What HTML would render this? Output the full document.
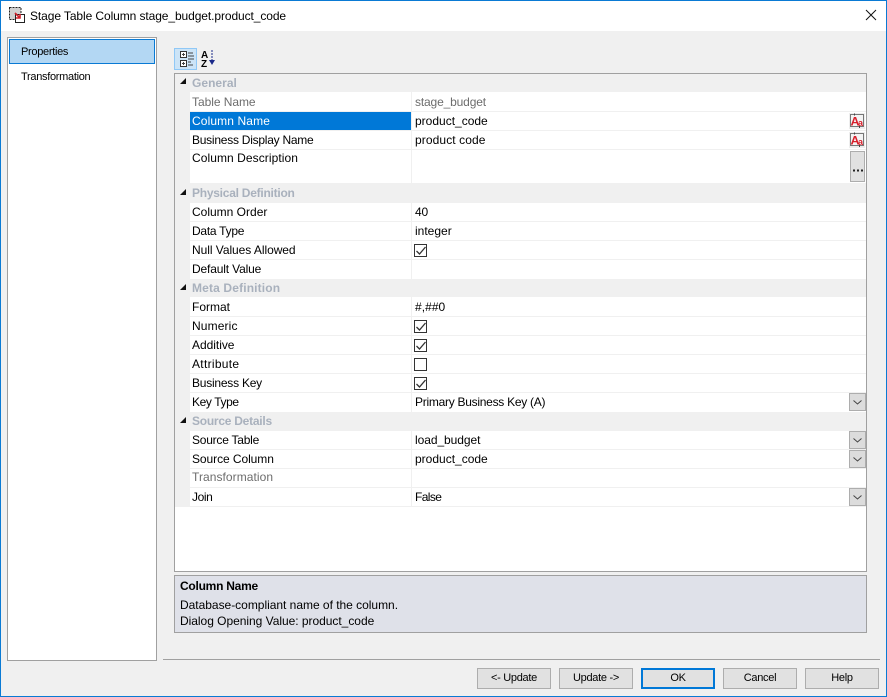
<!DOCTYPE html>
<html><head><meta charset="utf-8"><style>
html,body{margin:0;padding:0;width:887px;height:697px;overflow:hidden;background:#f0f0f0}
body{position:relative;font:12px "Liberation Sans",sans-serif;color:#000}
div,span,svg{position:absolute;box-sizing:border-box}
.t{white-space:nowrap;line-height:14px;letter-spacing:-.15px}
.h{color:#a9b1bd;font-weight:bold;letter-spacing:-.25px}
.g{color:#6d6d6d}
.sep{left:190px;width:676px;height:1px;background:#f0f0f0}
.btn{top:668px;height:21px;width:74px;background:#e1e1e1;border:1px solid #adadad;text-align:center;line-height:19px;font-size:11px;letter-spacing:-.3px}
.drop{left:849px;width:17px;height:18px;background:#dcdcdc;border:1px solid #adadad}
.cb{left:414px;width:13px;height:13px;background:#fff;border:1px solid #333}
</style></head><body>
<div style="left:0;top:0;width:887px;height:697px;border:1px solid #0a7ad4;z-index:9"></div>
<div style="left:1px;top:1px;width:885px;height:30px;background:#fff"></div>
<svg style="left:8px;top:7px" width="18" height="18" viewBox="0 0 18 18"><rect x="1.500" y=".5" width="11.500" height="12" fill="#d0d0d0" stroke="#222" stroke-dasharray="2 1"/><rect x="7.500" y="7.500" width="9" height="8" fill="#fff" stroke="#222"/><path d="M7 6l5 5M12 7v4H8" stroke="#d0202a" stroke-width="1.600" fill="none"/></svg>
<span class="t" style="left:30px;top:9px;letter-spacing:-.09px">Stage Table Column stage_budget.product_code</span>
<svg style="left:865px;top:9px" width="13" height="13"><path d="M1 1l10 10M11 1L1 11" stroke="#111" stroke-width="1" fill="none"/></svg>

<div style="left:7px;top:37px;width:150px;height:624px;background:#fff;border:1px solid #a0a0a0"></div>
<div style="left:9px;top:39px;width:146px;height:25px;background:#b3d7f3;border:1px solid #0a7ad4"></div>
<span class="t" style="left:21px;top:45px;font-size:11px;letter-spacing:-.3px">Properties</span>
<span class="t" style="left:21px;top:70px;font-size:11px;letter-spacing:-.3px">Transformation</span>

<div style="left:174px;top:48px;width:23px;height:22px;background:#cce4f7;border:1px solid #90c8f6"></div>
<svg style="left:180px;top:51px" width="16" height="16" viewBox="0 0 16 16"><rect x=".5" y=".5" width="6" height="6" fill="#fff" stroke="#333"/><rect x=".5" y="9.500" width="6" height="6" fill="#fff" stroke="#333"/><path d="M2 3.500h3M3.500 2v3M2 12.500h3M3.500 11v3M8 2h5M8 5h6M8 8h6M8 11h3M8 14h5" stroke="#444" fill="none"/></svg>
<svg style="left:201px;top:49px" width="16" height="20" viewBox="0 0 16 20"><text x="0" y="9" font-family="Liberation Sans" font-size="10" font-weight="bold">A</text><text x="0" y="18" font-family="Liberation Sans" font-size="10" font-weight="bold">Z</text><path d="M11 1v11" stroke="#1a2a8a" stroke-dasharray="2 1"/><path d="M8 11h6l-3 5z" fill="#1a2a8a"/></svg>

<div style="left:174px;top:73px;width:693px;height:499px;background:#fff;border:1px solid #a0a0a0"></div>
<div style="left:175px;top:74px;width:15px;height:433px;background:#f0f0f0"></div>
<div style="left:175px;top:74px;width:691px;height:18px;background:#f0f0f0"></div>
<div style="left:175px;top:183px;width:691px;height:20px;background:#f0f0f0"></div>
<div style="left:175px;top:279px;width:691px;height:18px;background:#f0f0f0"></div>
<div style="left:175px;top:412px;width:691px;height:19px;background:#f0f0f0"></div>
<div style="left:175px;top:506px;width:691px;height:1px;background:#f0f0f0"></div>
<div style="left:411px;top:92px;width:1px;height:414px;background:#f0f0f0"></div>
<div class="sep" style="top:111px"></div><div class="sep" style="top:130px"></div><div class="sep" style="top:149px"></div>
<div class="sep" style="top:221px"></div><div class="sep" style="top:240px"></div><div class="sep" style="top:259px"></div>
<div class="sep" style="top:316px"></div><div class="sep" style="top:335px"></div><div class="sep" style="top:354px"></div><div class="sep" style="top:373px"></div><div class="sep" style="top:392px"></div>
<div class="sep" style="top:449px"></div><div class="sep" style="top:468px"></div><div class="sep" style="top:487px"></div>
<div style="left:190px;top:112px;width:221px;height:18px;background:#0078d7"></div>

<svg style="left:180px;top:78px" width="7" height="7"><path d="M6 0v6H0z" fill="#111"/></svg>
<svg style="left:180px;top:189px" width="7" height="7"><path d="M6 0v6H0z" fill="#111"/></svg>
<svg style="left:180px;top:284px" width="7" height="7"><path d="M6 0v6H0z" fill="#111"/></svg>
<svg style="left:180px;top:417px" width="7" height="7"><path d="M6 0v6H0z" fill="#111"/></svg>

<span class="t h" style="left:192px;top:76px;letter-spacing:.03px">General</span>
<span class="t g" style="left:192px;top:95px;letter-spacing:-.05px">Table Name</span><span class="t g" style="left:415px;top:95px">stage_budget</span>
<span class="t" style="left:192px;top:114px;color:#fff;letter-spacing:.12px">Column Name</span><span class="t" style="left:415px;top:114px;letter-spacing:0">product_code</span>
<span class="t" style="left:192px;top:133px;letter-spacing:-.25px">Business Display Name</span><span class="t" style="left:415px;top:133px;letter-spacing:.1px">product code</span>
<span class="t" style="left:192px;top:151px;letter-spacing:.07px">Column Description</span>

<span class="t h" style="left:192px;top:186px">Physical Definition</span>
<span class="t" style="left:192px;top:205px;letter-spacing:0">Column Order</span><span class="t" style="left:415px;top:205px">40</span>
<span class="t" style="left:192px;top:224px;letter-spacing:-.26px">Data Type</span><span class="t" style="left:415px;top:224px;letter-spacing:0">integer</span>
<span class="t" style="left:192px;top:243px;letter-spacing:-.05px">Null Values Allowed</span>
<span class="t" style="left:192px;top:262px">Default Value</span>

<span class="t h" style="left:192px;top:281px;letter-spacing:.15px">Meta Definition</span>
<span class="t" style="left:192px;top:300px;letter-spacing:0">Format</span><span class="t" style="left:415px;top:300px;letter-spacing:.05px">#,##0</span>
<span class="t" style="left:192px;top:319px;letter-spacing:.13px">Numeric</span>
<span class="t" style="left:192px;top:338px;letter-spacing:-.03px">Additive</span>
<span class="t" style="left:192px;top:357px;letter-spacing:.3px">Attribute</span>
<span class="t" style="left:192px;top:376px;letter-spacing:-.23px">Business Key</span>
<span class="t" style="left:192px;top:395px;letter-spacing:-.4px">Key Type</span><span class="t" style="left:415px;top:395px;letter-spacing:-.27px">Primary Business Key (A)</span>

<span class="t h" style="left:192px;top:414px">Source Details</span>
<span class="t" style="left:192px;top:433px;letter-spacing:-.23px">Source Table</span><span class="t" style="left:415px;top:433px;letter-spacing:-.06px">load_budget</span>
<span class="t" style="left:192px;top:452px;letter-spacing:-.07px">Source Column</span><span class="t" style="left:415px;top:452px;letter-spacing:0">product_code</span>
<span class="t g" style="left:192px;top:470px;letter-spacing:.06px">Transformation</span>
<span class="t" style="left:192px;top:490px;letter-spacing:-.4px">Join</span><span class="t" style="left:415px;top:490px;letter-spacing:-.6px">False</span>

<div class="cb" style="top:244px"></div><svg style="left:415px;top:245px" width="12" height="12"><path d="M1.500 6l3 3 6-7" stroke="#333" stroke-width="1.300" fill="none"/></svg>
<div class="cb" style="top:320px"></div><svg style="left:415px;top:321px" width="12" height="12"><path d="M1.500 6l3 3 6-7" stroke="#333" stroke-width="1.300" fill="none"/></svg>
<div class="cb" style="top:339px"></div><svg style="left:415px;top:340px" width="12" height="12"><path d="M1.500 6l3 3 6-7" stroke="#333" stroke-width="1.300" fill="none"/></svg>
<div class="cb" style="top:358px"></div>
<div class="cb" style="top:377px"></div><svg style="left:415px;top:378px" width="12" height="12"><path d="M1.500 6l3 3 6-7" stroke="#333" stroke-width="1.300" fill="none"/></svg>

<svg style="left:849px;top:113px" width="16" height="16"><rect width="16" height="16" fill="#eee"/><rect x="1.500" y="1.500" width="13" height="12" fill="#f4f4f4" stroke="#777"/><path d="M5.500 .5v2M10.500 13v2" stroke="#444"/><text x="1.500" y="12.500" font-family="Liberation Sans" font-size="12" font-weight="bold" fill="#d8202c" textLength="9" lengthAdjust="spacingAndGlyphs">A</text><text x="9" y="13" font-family="Liberation Sans" font-size="9" font-weight="bold" fill="#d8202c">a</text></svg>
<svg style="left:849px;top:132px" width="16" height="16"><rect width="16" height="16" fill="#eee"/><rect x="1.500" y="1.500" width="13" height="12" fill="#f4f4f4" stroke="#777"/><path d="M5.500 .5v2M10.500 13v2" stroke="#444"/><text x="1.500" y="12.500" font-family="Liberation Sans" font-size="12" font-weight="bold" fill="#d8202c" textLength="9" lengthAdjust="spacingAndGlyphs">A</text><text x="9" y="13" font-family="Liberation Sans" font-size="9" font-weight="bold" fill="#d8202c">a</text></svg>
<div style="left:850px;top:151px;width:15px;height:31px;background:#e1e1e1;border:1px solid #adadad"></div>
<svg style="left:851px;top:169px" width="13" height="6"><path d="M2 1.500h2M6 1.500h2M10 1.500h2" stroke="#222" stroke-width="2" fill="none"/></svg>

<div class="drop" style="top:393px"></div><svg style="left:853px;top:400px" width="9" height="5"><path d="M.5 .5l4 3.500 4-3.500" stroke="#444" fill="none"/></svg>
<div class="drop" style="top:431px"></div><svg style="left:853px;top:438px" width="9" height="5"><path d="M.5 .5l4 3.500 4-3.500" stroke="#444" fill="none"/></svg>
<div class="drop" style="top:450px"></div><svg style="left:853px;top:457px" width="9" height="5"><path d="M.5 .5l4 3.500 4-3.500" stroke="#444" fill="none"/></svg>
<div class="drop" style="top:488px"></div><svg style="left:853px;top:495px" width="9" height="5"><path d="M.5 .5l4 3.500 4-3.500" stroke="#444" fill="none"/></svg>

<div style="left:174px;top:575px;width:693px;height:58px;background:#dfe1e9;border:1px solid #a0a0a0"></div>
<span class="t" style="left:180px;top:579px;font-weight:bold;letter-spacing:-.25px">Column Name</span>
<span class="t" style="left:180px;top:598px;letter-spacing:-.02px">Database-compliant name of the column.</span>
<span class="t" style="left:180px;top:614px;letter-spacing:-.03px">Dialog Opening Value: product_code</span>

<div style="left:163px;top:659px;width:717px;height:1px;background:#a0a0a0"></div>
<div class="btn" style="left:477px">&lt;- Update</div>
<div class="btn" style="left:559px">Update -&gt;</div>
<div class="btn" style="left:641px;border:2px solid #0078d7;line-height:17px">OK</div>
<div class="btn" style="left:723px">Cancel</div>
<div class="btn" style="left:805px">Help</div>
</body></html>
